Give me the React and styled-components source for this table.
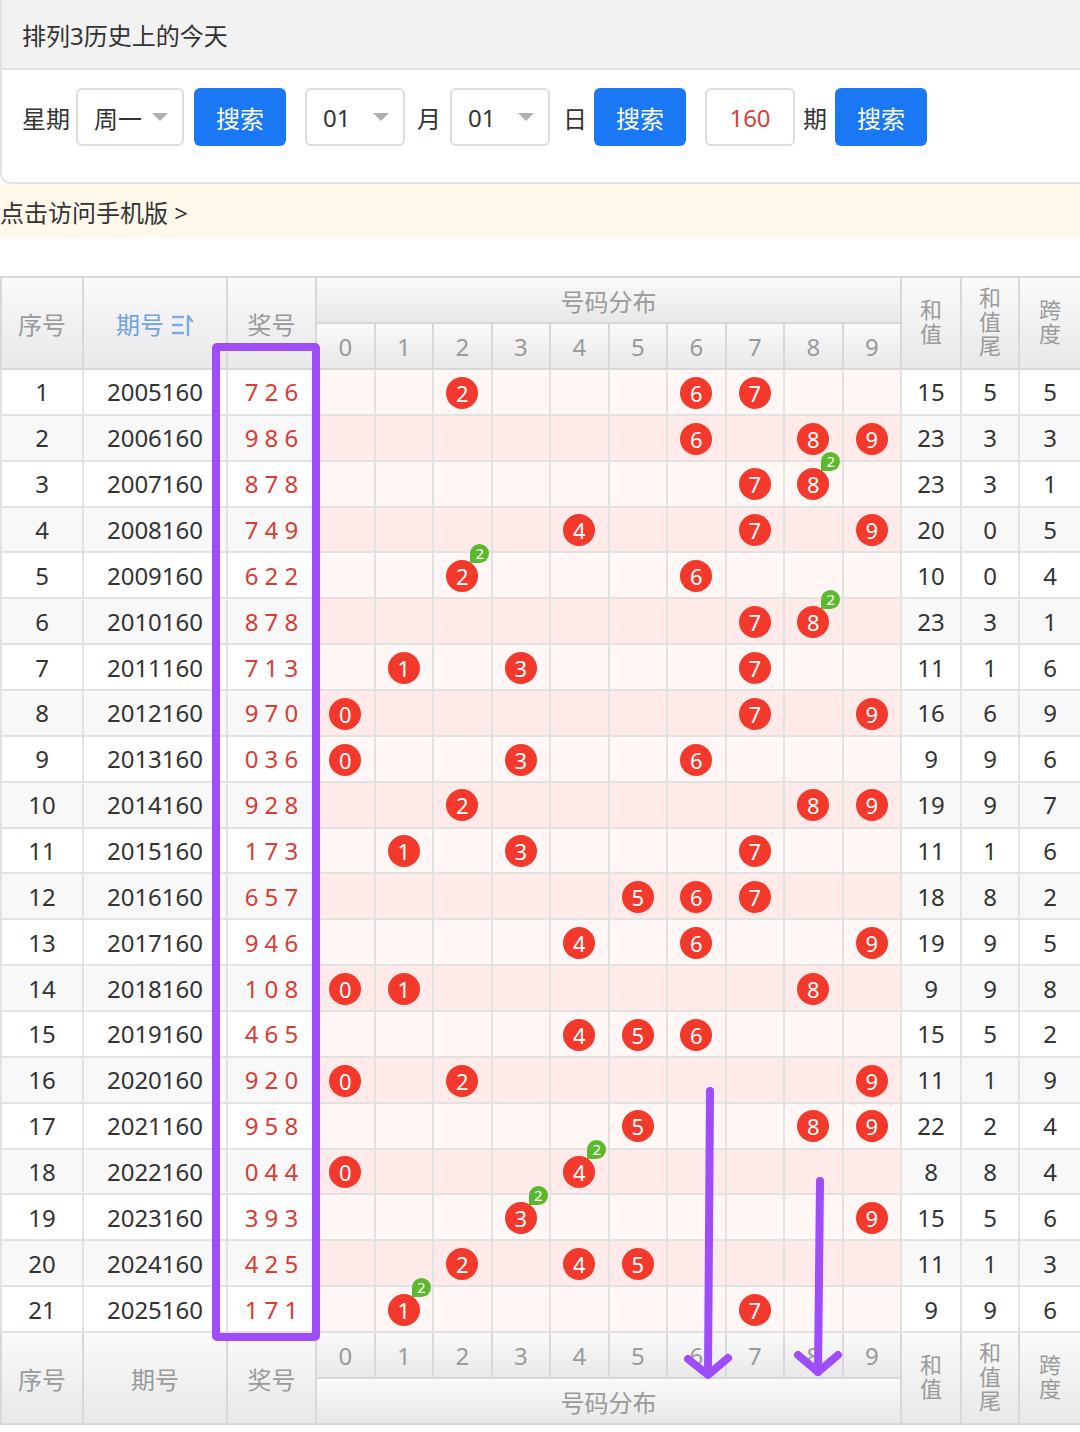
import styled, { createGlobalStyle } from "styled-components"

const GlobalStyle = createGlobalStyle`
  body {
    margin: 0;
    background: #fff;
    overflow-x: hidden;
    font-family: "Noto Sans", "Noto Sans CJK SC", sans-serif;
    color: #333;
  }
`

const Page = styled.div`
  width: 1080px;
`

const Panel = styled.div`
  margin-right: -30px;
  border: 2px solid #e2e2e2;
  border-top: none;
  border-radius: 0 0 10px 10px;
  overflow: hidden;
`

const PanelTitle = styled.div`
  height: 68px;
  background: #f2f2f2;
  border-bottom: 2px solid #e2e2e2;
  display: flex;
  align-items: center;
  padding-left: 20px;
  font-size: 24px;
  color: #333;
`

const FormRow = styled.div`
  display: flex;
  align-items: center;
  padding: 18px 0 36px 20px;
`

const Label = styled.span`
  font-size: 24px;
  color: #333;
  margin: 0 ${p => p.$mr ?? 4}px 0 ${p => p.$ml ?? 0}px;
`

const Select = styled.div`
  width: ${p => p.$w}px;
  height: 58px;
  box-sizing: border-box;
  border: 2px solid #dedede;
  border-radius: 6px;
  display: flex;
  align-items: center;
  justify-content: space-between;
  padding: 0 14px 0 16px;
  font-size: 24px;
  color: #333;
  margin-left: ${p => p.$ml ?? 0}px;
`

const Caret = styled.span`
  width: 0;
  height: 0;
  border-left: 8px solid transparent;
  border-right: 8px solid transparent;
  border-top: 8px solid #b0b0b0;
`

const Button = styled.button`
  width: 92px;
  height: 58px;
  border: none;
  border-radius: 6px;
  background: #1a78f5;
  color: #fff;
  font-family: inherit;
  font-size: 24px;
  margin-left: ${p => p.$ml ?? 0}px;
`

const Input = styled.div`
  width: 90px;
  height: 58px;
  box-sizing: border-box;
  border: 2px solid #dedede;
  border-radius: 6px;
  display: flex;
  align-items: center;
  justify-content: center;
  font-size: 24px;
  color: #d6433a;
  margin-left: ${p => p.$ml ?? 0}px;
`

const Notice = styled.div`
  height: 54px;
  background: #fef8ea;
  display: flex;
  align-items: center;
  font-size: 24px;
  color: #333;
`

const TableWrap = styled.div`
  position: relative;
  margin-top: 38px;
`

const Table = styled.table`
  width: 1080px;
  table-layout: fixed;
  border-collapse: collapse;
  font-size: 24px;
`

const Head = styled.th`
  font-weight: normal;
  color: #9a9a9a;
  height: 44px;
  padding: 0;
  text-align: center;
  vertical-align: middle;
  border: 2px solid #d8d8d8;
  background: linear-gradient(#fafafa, #e8e8e8);
  font-size: 24px;
`

const Stack = styled.span`
  display: inline-block;
  vertical-align: middle;
  writing-mode: vertical-rl;
  text-orientation: upright;
  font-family: "Noto Sans CJK SC", sans-serif;
  font-size: 22px;
  letter-spacing: 2px;
  line-height: 1;
`

const Cell = styled.td`
  height: 43.86px;
  padding: 0;
  text-align: center;
  border: 2px solid #e2e2e2;
  background: ${p => (p.$even ? "#f8f8f8" : "#fff")};
  color: ${p => (p.$red ? "#dc3b31" : "#333")};
`

const DistCell = styled(Cell)`
  background: ${p => (p.$even ? "#ffeaea" : "#fff6f6")};
`

const Ball = styled.span`
  position: relative;
  display: inline-flex;
  align-items: center;
  justify-content: center;
  width: 32px;
  height: 32px;
  border-radius: 50%;
  background: #f2392b;
  color: #fff;
  font-size: 22px;
  line-height: 1;
  vertical-align: middle;
  top: -1px;
`

const Repeat = styled.span`
  position: absolute;
  top: -16px;
  right: -11px;
  width: 19px;
  height: 19px;
  border-radius: 50% 50% 50% 0;
  background: #5cb82d;
  color: #fff;
  font-size: 15px;
  display: flex;
  align-items: center;
  justify-content: center;
`

const SortHead = styled(Head)`
  color: #6ea2e6;
`

const Highlight = styled.div`
  position: absolute;
  left: 212px;
  top: 67px;
  width: 108px;
  height: 998px;
  box-sizing: border-box;
  border: 8px solid #9f4cfb;
  border-radius: 5px;
  pointer-events: none;
`

const Overlay = styled.svg`
  position: absolute;
  left: 0;
  top: 0;
  pointer-events: none;
`

const rows = [
  ["2005160", "726", 15, 5, 5],
  ["2006160", "986", 23, 3, 3],
  ["2007160", "878", 23, 3, 1],
  ["2008160", "749", 20, 0, 5],
  ["2009160", "622", 10, 0, 4],
  ["2010160", "878", 23, 3, 1],
  ["2011160", "713", 11, 1, 6],
  ["2012160", "970", 16, 6, 9],
  ["2013160", "036", 9, 9, 6],
  ["2014160", "928", 19, 9, 7],
  ["2015160", "173", 11, 1, 6],
  ["2016160", "657", 18, 8, 2],
  ["2017160", "946", 19, 9, 5],
  ["2018160", "108", 9, 9, 8],
  ["2019160", "465", 15, 5, 2],
  ["2020160", "920", 11, 1, 9],
  ["2021160", "958", 22, 2, 4],
  ["2022160", "044", 8, 8, 4],
  ["2023160", "393", 15, 5, 6],
  ["2024160", "425", 11, 1, 3],
  ["2025160", "171", 9, 9, 6],
]

const digits = [0, 1, 2, 3, 4, 5, 6, 7, 8, 9]

const SortIcon = () => (
  <svg width="22" height="24" viewBox="0 0 22 24" style={{ verticalAlign: -3, marginLeft: 8 }}>
    <g stroke="#7aaae8" strokeWidth="2.4" fill="none" strokeLinecap="round">
      <line x1="1" y1="4" x2="11" y2="4" />
      <line x1="1" y1="12" x2="10" y2="12" />
      <line x1="1" y1="20" x2="11" y2="20" />
      <line x1="16" y1="3" x2="16" y2="22" />
      <line x1="16" y1="3" x2="20" y2="8" />
    </g>
  </svg>
)

const SideHeads = () => (
  <>
    <Head rowSpan={2}><Stack>和值</Stack></Head>
    <Head rowSpan={2}><Stack>和值尾</Stack></Head>
    <Head rowSpan={2}><Stack>跨度</Stack></Head>
  </>
)

const App = () => {
  return (
    <Page>
      <GlobalStyle />
      <Panel>
        <PanelTitle>排列3历史上的今天</PanelTitle>
        <FormRow>
          <Label $mr={6}>星期</Label>
          <Select $w={108}>周一<Caret /></Select>
          <Button $ml={10}>搜索</Button>
          <Select $w={100} $ml={19}>01<Caret /></Select>
          <Label $ml={12} $mr={9}>月</Label>
          <Select $w={100}>01<Caret /></Select>
          <Label $ml={13} $mr={7}>日</Label>
          <Button>搜索</Button>
          <Input $ml={19}>160</Input>
          <Label $ml={8} $mr={8}>期</Label>
          <Button>搜索</Button>
        </FormRow>
      </Panel>
      <Notice>点击访问手机版 &gt;</Notice>

      <TableWrap>
        <Table>
          <colgroup>
            <col style={{ width: 82 }} />
            <col style={{ width: 144 }} />
            <col style={{ width: 89 }} />
            {digits.map(d => <col key={d} style={{ width: 58.5 }} />)}
            <col style={{ width: 60 }} />
            <col style={{ width: 58 }} />
            <col style={{ width: 62 }} />
          </colgroup>
          <thead>
            <tr>
              <Head rowSpan={2}>序号</Head>
              <SortHead rowSpan={2}>期号<SortIcon /></SortHead>
              <Head rowSpan={2}>奖号</Head>
              <Head colSpan={10}>号码分布</Head>
              <SideHeads />
            </tr>
            <tr>
              {digits.map(d => <Head key={d}>{d}</Head>)}
            </tr>
          </thead>
          <tbody>
            {rows.map(([issue, num, sum, tail, span], i) => {
              const even = i % 2 === 1
              const nums = num.split("").map(Number)
              return (
                <tr key={issue}>
                  <Cell $even={even}>{i + 1}</Cell>
                  <Cell $even={even}>{issue}</Cell>
                  <Cell $even={even} $red>{num.split("").join(" ")}</Cell>
                  {digits.map(d => {
                    const count = nums.filter(n => n === d).length
                    return (
                      <DistCell key={d} $even={even}>
                        {count > 0 && (
                          <Ball>
                            {d}
                            {count > 1 && <Repeat>{count}</Repeat>}
                          </Ball>
                        )}
                      </DistCell>
                    )
                  })}
                  <Cell $even={even}>{sum}</Cell>
                  <Cell $even={even}>{tail}</Cell>
                  <Cell $even={even}>{span}</Cell>
                </tr>
              )
            })}
          </tbody>
          <tfoot>
            <tr>
              <Head rowSpan={2}>序号</Head>
              <Head rowSpan={2}>期号</Head>
              <Head rowSpan={2}>奖号</Head>
              {digits.map(d => <Head key={d}>{d}</Head>)}
              <SideHeads />
            </tr>
            <tr>
              <Head colSpan={10}>号码分布</Head>
            </tr>
          </tfoot>
        </Table>

        <Highlight />
        <Overlay width="1080" height="1150">
          <g stroke="#9f4cfb" strokeWidth="8" fill="none" strokeLinecap="round" strokeLinejoin="round">
            <line x1="710" y1="815" x2="708" y2="1098" />
            <polyline points="688,1083 708,1099 728,1082" />
            <line x1="820" y1="905" x2="818" y2="1096" />
            <polyline points="798,1079 818,1096 838,1079" />
          </g>
        </Overlay>
      </TableWrap>
    </Page>
  )
}

export default App
